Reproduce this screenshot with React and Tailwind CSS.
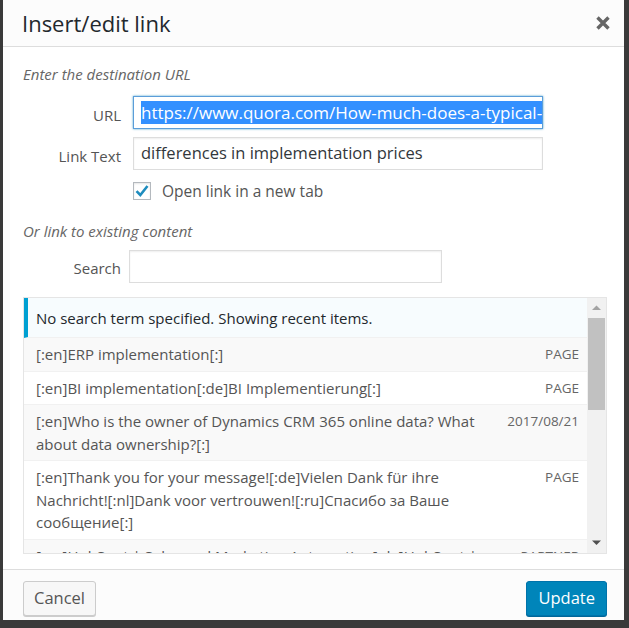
import React from "react";

const font = { fontFamily: '"Open Sans", "Noto Sans", sans-serif' };

function Row({ lines, info, alt }) {
  return (
    <div className={`flex justify-between border-b border-[#f1f1f1] pl-[12px] pr-[8px] py-[5px] ${alt ? "bg-[#f9f9f9]" : "bg-white"}`}>
      <div className="text-[15px] leading-[22.5px] text-[#555] whitespace-nowrap">
        {lines.map((l, i) => (
          <div key={i}>{l}</div>
        ))}
      </div>
      <div className="text-[13.5px] leading-[22.5px] text-[#666] whitespace-nowrap">{info}</div>
    </div>
  );
}

export default function App() {
  return (
    <div className="w-[629px] h-[628px] bg-[#3a3a3a] pl-[3px] overflow-hidden" style={font}>
      <div className="w-[621px] h-[620px] bg-white flex flex-col">
        {/* header */}
        <div className="h-[47px] shrink-0 bg-[#fcfcfc] border-b border-[#dddddd] flex items-center justify-between pl-[19px] pr-[13px]">
          <div className="text-[22px] text-[#23282d] leading-none">Insert/edit link</div>
          <svg width="16" height="16" viewBox="0 0 16 16">
            <path d="M2.5 2.5 L13.5 13.5 M13.5 2.5 L2.5 13.5" stroke="#666" strokeWidth="3.4" strokeLinecap="butt" />
          </svg>
        </div>

        {/* body */}
        <div className="flex-1 pl-[20px] pr-[17px] pt-[16px] flex flex-col">
          <div className="italic text-[15px] leading-[22px] text-[#666]">Enter the destination URL</div>

          <div className="flex items-center mt-[11px]">
            <div className="w-[98px] text-right text-[15px] text-[#555] pt-[6px]">URL</div>
            <div className="ml-[12px] w-[410px] h-[33px] border border-[#5b9dd9] shadow-[0_0_2px_rgba(30,140,190,0.8)] bg-white overflow-hidden whitespace-nowrap flex items-center pl-[7px]">
              <span className="bg-[#3390ff] text-white text-[17px] leading-[23px]">https://www.quora.com/How-much-does-a-typical-</span>
            </div>
          </div>

          <div className="flex items-center mt-[8px]">
            <div className="w-[98px] text-right text-[15px] text-[#555] pt-[6px]">Link Text</div>
            <div className="ml-[12px] w-[410px] h-[33px] border border-[#dddddd] shadow-[inset_0_1px_2px_rgba(0,0,0,0.07)] bg-white overflow-hidden whitespace-nowrap flex items-center pl-[7px]">
              <span className="text-[#32373c] text-[16.5px]">differences in implementation prices</span>
            </div>
          </div>

          <div className="flex items-center mt-[10px] ml-[110px]">
            <div className="w-[18px] h-[18px] border border-[#b4b9be] bg-white shadow-[inset_0_1px_2px_rgba(0,0,0,0.1)] flex items-center justify-center">
              <svg width="16" height="16" viewBox="0 0 16 16">
                <path d="M2.5 8.2 L6.3 12 L13.5 3" fill="none" stroke="#1e8cbe" strokeWidth="2.6" />
              </svg>
            </div>
            <div className="ml-[11px] text-[15.5px] text-[#555] leading-[22px]">Open link in a new tab</div>
          </div>

          <div className="italic text-[15px] leading-[22px] text-[#666] mt-[18px]">Or link to existing content</div>

          <div className="flex items-center mt-[8px]">
            <div className="w-[98px] text-right text-[15px] text-[#555] pt-[3px]">Search</div>
            <div className="ml-[8px] w-[313px] h-[33px] border border-[#dddddd] shadow-[inset_0_1px_2px_rgba(0,0,0,0.07)] bg-white"></div>
          </div>

          {/* results */}
          <div className="mt-[14px] w-[584px] h-[257px] border border-[#e5e5e5] flex overflow-hidden">
            <div className="flex-1 overflow-hidden">
              <div className="bg-[#f7fcfe] border-l-[4px] border-[#00a0d2] border-b border-b-[#f1f1f1] pl-[8px] pt-[10px] pb-[8px] text-[15px] leading-[21px] text-[#23282d]">
                No search term specified. Showing recent items.
              </div>
              <Row alt lines={["[:en]ERP implementation[:]"]} info="PAGE" />
              <Row lines={["[:en]BI implementation[:de]BI Implementierung[:]"]} info="PAGE" />
              <Row alt lines={["[:en]Who is the owner of Dynamics CRM 365 online data? What", "about data ownership?[:]"]} info="2017/08/21" />
              <Row
                lines={[
                  "[:en]Thank you for your message![:de]Vielen Dank für ihre",
                  "Nachricht![:nl]Dank voor vertrouwen![:ru]Спасибо за Ваше",
                  "сообщение[:]",
                ]}
                info="PAGE"
              />
              <Row alt lines={["[:en]HubSpot | Sales and Marketing Automation[:de]HubSpot |", "Vertriebs- und Marketing-Automatisierung[:]"]} info="PARTNER" />
            </div>
            {/* scrollbar */}
            <div className="w-[19px] shrink-0 bg-[#f1f1f1] flex flex-col items-center">
              <div className="h-[20px] w-full flex items-center justify-center">
                <svg width="9" height="6" viewBox="0 0 9 6"><path d="M0 5 L4.5 0.5 L9 5 Z" fill="#a3a3a3" /></svg>
              </div>
              <div className="w-[17px] h-[92px] bg-[#c1c1c1]"></div>
              <div className="flex-1"></div>
              <div className="h-[20px] w-full flex items-center justify-center">
                <svg width="9" height="6" viewBox="0 0 9 6"><path d="M0 0.5 L4.5 5 L9 0.5 Z" fill="#505050" /></svg>
              </div>
            </div>
          </div>
        </div>

        {/* footer */}
        <div className="h-[51px] shrink-0 bg-[#fcfcfc] border-t border-[#dddddd] flex items-start justify-between pl-[20px] pr-[17px] pt-[11px]">
          <div className="h-[35px] px-[10px] bg-[#f7f7f7] border border-[#cccccc] rounded-[3px] shadow-[0_1px_0_#cccccc] text-[#555] text-[16.5px] flex items-center">Cancel</div>
          <div className="h-[35px] px-[11px] bg-[#0085ba] border border-[#0073aa] rounded-[3px] shadow-[0_1px_0_#006799] text-white text-[16.5px] flex items-center">Update</div>
        </div>
      </div>
    </div>
  );
}
